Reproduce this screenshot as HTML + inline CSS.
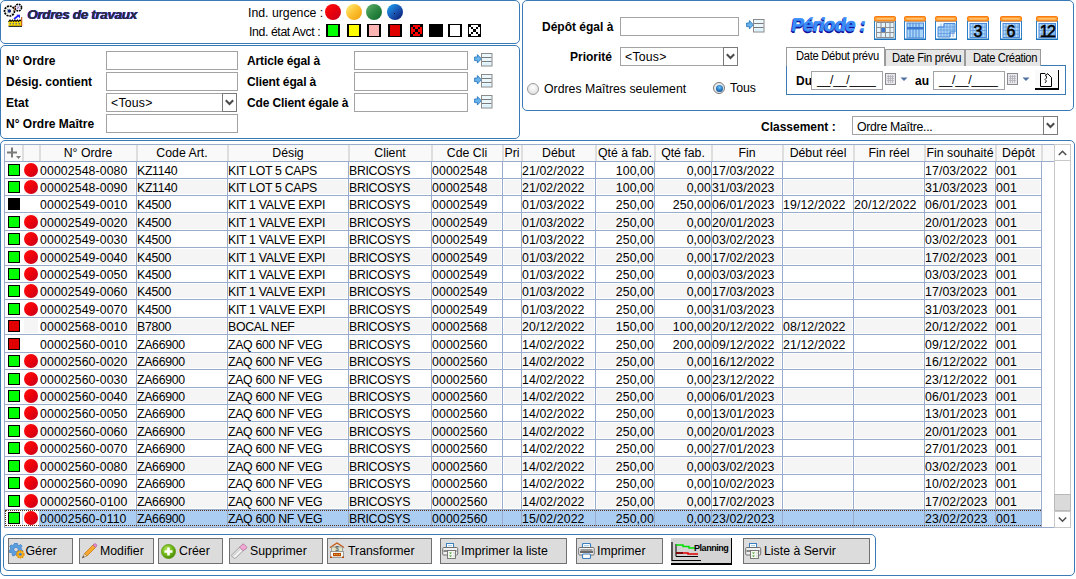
<!DOCTYPE html><html><head><meta charset="utf-8"><style>
*{margin:0;padding:0;box-sizing:border-box}
html,body{width:1076px;height:579px;overflow:hidden;background:#fff}
body{position:relative;font-family:"Liberation Sans",sans-serif;font-size:12.3px;color:#000}
.ab{position:absolute}
.pn{position:absolute;border:1px solid #3b7bb5;border-radius:5px}
.lb{position:absolute;font-weight:bold;font-size:12px;white-space:nowrap;line-height:14px}
.tx{position:absolute;white-space:nowrap;line-height:14px}
.inp{position:absolute;border:1px solid #a3a3a3;background:#fff;height:19px}
.cmb{position:absolute;border:1px solid #a3a3a3;background:#fff;height:19px}
.cmb .dd{position:absolute;right:-1px;top:-1px;width:15px;height:19px;border:1px solid #7a7a7a;background:#fff}
.cmb .v{position:absolute;left:4px;top:2px;line-height:14px;letter-spacing:0.2px}
.lico{position:absolute;width:19px;height:13px}
.sq{position:absolute;border:2px solid #000;width:14px;height:13px}
.circ{position:absolute;width:16px;height:16px;border-radius:50%}
.hl{position:absolute;height:1px;background:#9aaccb}
.vl{position:absolute;width:1px;background:#9aaccb}
.cell{position:absolute;white-space:nowrap;line-height:14px;overflow:hidden}
.hsep{position:absolute;width:2px;background:#dedede}
.btn{position:absolute;top:538px;height:26px;border:1px solid #707070;background:#dcdcdc;font-size:12.3px;white-space:nowrap}
.btn span{position:absolute;top:4.5px;line-height:14px}
.rsq{position:absolute;width:12px;height:12px;border:1px solid #000}
.rci{position:absolute;width:14px;height:14px;border-radius:50%;background:linear-gradient(135deg,#ff0a0a 15%,#e8000c 55%,#c8001e 95%)}
</style></head><body>

<div class="pn" style="left:0;top:0;width:520px;height:44px"></div>
<div class="pn" style="left:0;top:45px;width:520px;height:94px"></div>
<div class="pn" style="left:522px;top:0;width:552px;height:111px"></div>
<div class="pn" style="left:0;top:140px;width:1075px;height:436px"></div>
<div class="pn" style="left:3px;top:534px;width:873px;height:37px"></div>
<svg class="ab" style="left:3px;top:3px" width="21" height="25" viewBox="3 3 21 25">
<circle cx="9.5" cy="11" r="5" fill="#f4f4ec" stroke="#000" stroke-width="1.7" stroke-dasharray="2 0.9"/>
<circle cx="9.3" cy="11" r="1.8" fill="#102080"/>
<path d="M7 9 L8 10 M11.5 13 L12.5 14 M7 13.5 L8 12.5" stroke="#60a080" stroke-width="0.8"/>
<circle cx="18.3" cy="7.6" r="3.3" fill="#e8f0f8" stroke="#000" stroke-width="1.5" stroke-dasharray="1.8 0.8"/>
<path d="M17 6.5 L19 8.5 M19.5 6 L17 9" stroke="#a060c0" stroke-width="0.8"/>
<path d="M14.5 6.5 L14.5 11" stroke="#c07040" stroke-width="0.9"/>
<path d="M14 19 L18.5 15.5" stroke="#2020ff" stroke-width="1.6"/>
<path d="M16.5 14.8 L20 14.8 L20 18.3 Z" fill="#2020ff"/>
<rect x="8.5" y="21" width="13" height="5" fill="#ffe000"/>
<path d="M8.5 22 L10 20 L11 21.5 L12.5 20 L13.5 21.5 L15 20 L16 21.5 L17.5 20 L18.5 21.5 L20 20 L21 21" fill="none" stroke="#000" stroke-width="1.1"/>
<path d="M9.5 23.8 H11 M12.5 23.8 H14 M15.5 23.8 H17 M18.5 23.8 H20" stroke="#2040e0" stroke-width="1"/>
<path d="M8.5 26.3 H22" stroke="#000" stroke-width="1"/>
<path d="M21.7 17 V26" stroke="#c05010" stroke-width="1.1"/>
</svg>
<div class="tx" style="left:27.5px;top:6.5px;font-size:13.5px;font-weight:bold;font-style:italic;line-height:16px;letter-spacing:-0.35px;color:#303030;text-shadow:-0.8px 0 0 #2424ff,0 -0.4px 0 #2424ff">Ordres de travaux</div>
<div class="tx" style="left:248px;top:6px">Ind. urgence :</div>
<div class="tx" style="left:249px;top:25px;letter-spacing:-0.4px">Ind. état Avct :</div>
<div class="circ" style="left:325px;top:4px;background:linear-gradient(135deg,#ff0a0a 10%,#e8000c 50%,#c8001e 95%)"></div>
<div class="circ" style="left:346px;top:4px;background:linear-gradient(135deg,#ffe870 10%,#fcc030 50%,#f0a010 95%)"></div>
<div class="circ" style="left:366px;top:4px;background:linear-gradient(135deg,#5aaa6a 10%,#2e8a44 50%,#126a2e 95%)"></div>
<div class="circ" style="left:387px;top:4px;background:linear-gradient(135deg,#1a9ae8 10%,#1a5ab8 50%,#0a1a70 95%)"></div>
<div class="ab" style="left:394px;top:13px;width:1px;height:1px;background:#000"></div>
<div class="ab" style="left:326px;top:24px;width:14px;height:13px;border-style:solid;border-color:#000;border-width:1px 2px;background:#00ff00"></div>
<div class="ab" style="left:347px;top:24px;width:14px;height:13px;border-style:solid;border-color:#000;border-width:1px 2px;background:#ffff00"></div>
<div class="ab" style="left:367px;top:24px;width:14px;height:13px;border-style:solid;border-color:#000;border-width:1px 2px;background:#ffb4b4"></div>
<div class="ab" style="left:388px;top:24px;width:14px;height:13px;border-style:solid;border-color:#000;border-width:1px 2px;background:#e00000"></div>
<svg class="ab" style="left:410px;top:24px" width="13" height="13" viewBox="0 0 13 13" shape-rendering="crispEdges"><rect width="13" height="13" fill="#000"/><rect x="3" y="1" width="7" height="1" fill="#ff0000"/><rect x="3" y="2" width="7" height="1" fill="#ff0000"/><rect x="1" y="3" width="2" height="1" fill="#ff0000"/><rect x="5" y="3" width="3" height="1" fill="#ff0000"/><rect x="10" y="3" width="2" height="1" fill="#ff0000"/><rect x="1" y="4" width="2" height="1" fill="#ff0000"/><rect x="5" y="4" width="3" height="1" fill="#ff0000"/><rect x="10" y="4" width="2" height="1" fill="#ff0000"/><rect x="1" y="5" width="4" height="1" fill="#ff0000"/><rect x="8" y="5" width="4" height="1" fill="#ff0000"/><rect x="1" y="6" width="4" height="1" fill="#ff0000"/><rect x="8" y="6" width="4" height="1" fill="#ff0000"/><rect x="1" y="7" width="4" height="1" fill="#ff0000"/><rect x="8" y="7" width="4" height="1" fill="#ff0000"/><rect x="1" y="8" width="2" height="1" fill="#ff0000"/><rect x="5" y="8" width="3" height="1" fill="#ff0000"/><rect x="10" y="8" width="2" height="1" fill="#ff0000"/><rect x="1" y="9" width="2" height="1" fill="#ff0000"/><rect x="5" y="9" width="3" height="1" fill="#ff0000"/><rect x="10" y="9" width="2" height="1" fill="#ff0000"/><rect x="3" y="10" width="7" height="1" fill="#ff0000"/><rect x="3" y="11" width="7" height="1" fill="#ff0000"/></svg>
<div class="ab" style="left:429px;top:24px;width:14px;height:13px;border-style:solid;border-color:#000;border-width:1px 2px;background:#000"></div>
<div class="ab" style="left:448px;top:24px;width:14px;height:13px;border-style:solid;border-color:#000;border-width:1px 2px;background:#fff"></div>
<svg class="ab" style="left:468px;top:24px" width="13" height="13" viewBox="0 0 13 13" shape-rendering="crispEdges"><rect width="13" height="13" fill="#000"/><rect x="3" y="1" width="7" height="1" fill="#fff"/><rect x="3" y="2" width="7" height="1" fill="#fff"/><rect x="1" y="3" width="2" height="1" fill="#fff"/><rect x="5" y="3" width="3" height="1" fill="#fff"/><rect x="10" y="3" width="2" height="1" fill="#fff"/><rect x="1" y="4" width="2" height="1" fill="#fff"/><rect x="5" y="4" width="3" height="1" fill="#fff"/><rect x="10" y="4" width="2" height="1" fill="#fff"/><rect x="1" y="5" width="4" height="1" fill="#fff"/><rect x="8" y="5" width="4" height="1" fill="#fff"/><rect x="1" y="6" width="4" height="1" fill="#fff"/><rect x="8" y="6" width="4" height="1" fill="#fff"/><rect x="1" y="7" width="4" height="1" fill="#fff"/><rect x="8" y="7" width="4" height="1" fill="#fff"/><rect x="1" y="8" width="2" height="1" fill="#fff"/><rect x="5" y="8" width="3" height="1" fill="#fff"/><rect x="10" y="8" width="2" height="1" fill="#fff"/><rect x="1" y="9" width="2" height="1" fill="#fff"/><rect x="5" y="9" width="3" height="1" fill="#fff"/><rect x="10" y="9" width="2" height="1" fill="#fff"/><rect x="3" y="10" width="7" height="1" fill="#fff"/><rect x="3" y="11" width="7" height="1" fill="#fff"/></svg>
<div class="lb" style="left:6px;top:54px">N° Ordre</div>
<div class="lb" style="left:6px;top:75px">Désig. contient</div>
<div class="lb" style="left:6px;top:96px">Etat</div>
<div class="lb" style="left:6px;top:117px">N° Ordre Maître</div>
<div class="inp" style="left:106px;top:51px;width:132px"></div>
<div class="inp" style="left:106px;top:72px;width:132px"></div>
<div class="inp" style="left:106px;top:114px;width:132px"></div>
<div class="cmb" style="left:106px;top:93px;width:131px"><span class="v">&lt;Tous&gt;</span><div class="dd"><svg style="position:absolute;left:0;top:0" width="13" height="17" viewBox="0 0 13 17"><path d="M2.8 6.2 L6.5 10 L10.2 6.2" fill="none" stroke="#4a4a4a" stroke-width="2"/></svg></div></div>
<div class="lb" style="left:247px;top:54px;letter-spacing:-0.12px">Article égal à</div>
<div class="lb" style="left:247px;top:75px;letter-spacing:-0.12px">Client égal à</div>
<div class="lb" style="left:247px;top:96px;letter-spacing:-0.12px">Cde Client égale à</div>
<div class="inp" style="left:354px;top:51px;width:114px"></div>
<svg class="ab" style="left:474px;top:53px" width="19" height="14" viewBox="0 0 19 14">
<path d="M0.6 4 L3.4 4 L3.4 1.6 L7.4 5.8 L3.4 10 L3.4 7.6 L0.6 7.6 Z" fill="#6ab4ec" stroke="#2a78c0" stroke-width="0.9"/>
<rect x="7.5" y="0.5" width="10.5" height="12.5" fill="#eaf8fe" stroke="#8a8a8a" stroke-width="1"/>
<path d="M8 4.5 H17.5 M8 8.5 H17.5" stroke="#7a7a7a" stroke-width="1"/>
<path d="M9 11 H16.5" stroke="#c8ecfc" stroke-width="1"/>
</svg>
<div class="inp" style="left:354px;top:72px;width:114px"></div>
<svg class="ab" style="left:474px;top:74px" width="19" height="14" viewBox="0 0 19 14">
<path d="M0.6 4 L3.4 4 L3.4 1.6 L7.4 5.8 L3.4 10 L3.4 7.6 L0.6 7.6 Z" fill="#6ab4ec" stroke="#2a78c0" stroke-width="0.9"/>
<rect x="7.5" y="0.5" width="10.5" height="12.5" fill="#eaf8fe" stroke="#8a8a8a" stroke-width="1"/>
<path d="M8 4.5 H17.5 M8 8.5 H17.5" stroke="#7a7a7a" stroke-width="1"/>
<path d="M9 11 H16.5" stroke="#c8ecfc" stroke-width="1"/>
</svg>
<div class="inp" style="left:354px;top:93px;width:114px"></div>
<svg class="ab" style="left:474px;top:95px" width="19" height="14" viewBox="0 0 19 14">
<path d="M0.6 4 L3.4 4 L3.4 1.6 L7.4 5.8 L3.4 10 L3.4 7.6 L0.6 7.6 Z" fill="#6ab4ec" stroke="#2a78c0" stroke-width="0.9"/>
<rect x="7.5" y="0.5" width="10.5" height="12.5" fill="#eaf8fe" stroke="#8a8a8a" stroke-width="1"/>
<path d="M8 4.5 H17.5 M8 8.5 H17.5" stroke="#7a7a7a" stroke-width="1"/>
<path d="M9 11 H16.5" stroke="#c8ecfc" stroke-width="1"/>
</svg>
<div class="lb" style="left:542px;top:20px">Dépôt égal à</div>
<div class="inp" style="left:620px;top:17px;width:119px"></div>
<svg class="ab" style="left:746px;top:19px" width="19" height="14" viewBox="0 0 19 14">
<path d="M0.6 4 L3.4 4 L3.4 1.6 L7.4 5.8 L3.4 10 L3.4 7.6 L0.6 7.6 Z" fill="#6ab4ec" stroke="#2a78c0" stroke-width="0.9"/>
<rect x="7.5" y="0.5" width="10.5" height="12.5" fill="#eaf8fe" stroke="#8a8a8a" stroke-width="1"/>
<path d="M8 4.5 H17.5 M8 8.5 H17.5" stroke="#7a7a7a" stroke-width="1"/>
<path d="M9 11 H16.5" stroke="#c8ecfc" stroke-width="1"/>
</svg>
<div class="lb" style="left:570px;top:50px">Priorité</div>
<div class="cmb" style="left:620px;top:47px;width:118px"><span class="v">&lt;Tous&gt;</span><div class="dd"><svg style="position:absolute;left:0;top:0" width="13" height="17" viewBox="0 0 13 17"><path d="M2.8 6.2 L6.5 10 L10.2 6.2" fill="none" stroke="#4a4a4a" stroke-width="2"/></svg></div></div>
<div class="ab" style="left:527px;top:83px;width:12px;height:12px;border-radius:50%;border:1px solid #9a9a9a;background:radial-gradient(circle at 50% 35%,#fff 0%,#e8e8e8 60%,#d0d0d0 100%)"></div>
<div class="tx" style="left:544px;top:82px">Ordres Maîtres seulement</div>
<div class="ab" style="left:713px;top:82px;width:12px;height:12px;border-radius:50%;border:1px solid #7a7a7a;background:radial-gradient(circle at 50% 50%,#f8f8f8 0%,#e0e0e0 100%)"></div>
<div class="ab" style="left:715.5px;top:84.5px;width:7px;height:7px;border-radius:50%;background:radial-gradient(circle at 50% 35%,#7ac8f8 0%,#2a80c8 45%,#0a3a78 100%)"></div>
<div class="tx" style="left:730px;top:81px">Tous</div>
<div class="tx" style="left:790px;top:15px;font-size:18.5px;font-weight:bold;line-height:20px;color:#3a8ef8;letter-spacing:-0.6px;-webkit-text-stroke:0.6px #3a8ef8;text-shadow:-1px 1px 0 #12129a,0 1.5px 0 #12129a;transform:skewX(-9deg);transform-origin:0 100%">Période :</div>
<svg class="ab" style="left:874px;top:16px" width="22" height="24" viewBox="0 0 22 24"><rect x="0.5" y="5" width="21" height="18.5" fill="#fcfeff" stroke="#2a80c8" stroke-width="1"/><path d="M0.5 23.2 H21.5" stroke="#1a70b8" stroke-width="1.4"/><rect x="0.5" y="0.5" width="21" height="4.5" rx="1.2" fill="#ff9c30" stroke="#f87a10" stroke-width="1"/><rect x="2.5" y="2" width="17" height="1.6" fill="#ffc070"/><rect x="2.5" y="6.5" width="17.5" height="15" fill="#e4f4fe"/><rect x="7" y="11.5" width="4.5" height="5" fill="#3a78d0"/><line x1="2.5" y1="6.5" x2="2.5" y2="21.5" stroke="#8e8e8e" stroke-width="1"/><line x1="7" y1="6.5" x2="7" y2="21.5" stroke="#8e8e8e" stroke-width="1"/><line x1="11.5" y1="6.5" x2="11.5" y2="21.5" stroke="#8e8e8e" stroke-width="1"/><line x1="16" y1="6.5" x2="16" y2="21.5" stroke="#8e8e8e" stroke-width="1"/><line x1="20" y1="6.5" x2="20" y2="21.5" stroke="#8e8e8e" stroke-width="1"/><line x1="2.5" y1="6.5" x2="20" y2="6.5" stroke="#8e8e8e" stroke-width="1"/><line x1="2.5" y1="11.5" x2="20" y2="11.5" stroke="#8e8e8e" stroke-width="1"/><line x1="2.5" y1="16.5" x2="20" y2="16.5" stroke="#8e8e8e" stroke-width="1"/><line x1="2.5" y1="21.5" x2="20" y2="21.5" stroke="#8e8e8e" stroke-width="1"/></svg>
<svg class="ab" style="left:904px;top:16px" width="22" height="24" viewBox="0 0 22 24"><rect x="0.5" y="5" width="21" height="18.5" fill="#fcfeff" stroke="#2a80c8" stroke-width="1"/><path d="M0.5 23.2 H21.5" stroke="#1a70b8" stroke-width="1.4"/><rect x="0.5" y="0.5" width="21" height="4.5" rx="1.2" fill="#ff9c30" stroke="#f87a10" stroke-width="1"/><rect x="2.5" y="2" width="17" height="1.6" fill="#ffc070"/><rect x="3" y="7" width="16.5" height="15" fill="#a8d4f8" stroke="#4a88d8" stroke-width="1"/><line x1="6" y1="7" x2="6" y2="22" stroke="#4a88d8" stroke-width="1"/><line x1="9" y1="7" x2="9" y2="22" stroke="#4a88d8" stroke-width="1"/><line x1="12" y1="7" x2="12" y2="22" stroke="#4a88d8" stroke-width="1"/><line x1="15" y1="7" x2="15" y2="22" stroke="#4a88d8" stroke-width="1"/><rect x="3" y="11" width="16.5" height="2.5" fill="#3a78d0"/></svg>
<svg class="ab" style="left:935px;top:16px" width="22" height="24" viewBox="0 0 22 24"><rect x="0.5" y="5" width="21" height="18.5" fill="#fcfeff" stroke="#2a80c8" stroke-width="1"/><path d="M0.5 23.2 H21.5" stroke="#1a70b8" stroke-width="1.4"/><rect x="0.5" y="0.5" width="21" height="4.5" rx="1.2" fill="#ff9c30" stroke="#f87a10" stroke-width="1"/><rect x="2.5" y="2" width="17" height="1.6" fill="#ffc070"/><rect x="2.5" y="6.5" width="17.5" height="15" fill="#f4fbff"/><path d="M9 7.5 H20 V16 H15 V21 H3 V11 H9 Z" fill="#a8d4f8" stroke="#4a88d8" stroke-width="1"/><line x1="6" y1="7.5" x2="6" y2="21" stroke="#4a88d8" stroke-width="0.8" opacity="0.7"/><line x1="9" y1="7.5" x2="9" y2="21" stroke="#4a88d8" stroke-width="0.8" opacity="0.7"/><line x1="12" y1="7.5" x2="12" y2="21" stroke="#4a88d8" stroke-width="0.8" opacity="0.7"/><line x1="15" y1="7.5" x2="15" y2="21" stroke="#4a88d8" stroke-width="0.8" opacity="0.7"/><line x1="18" y1="7.5" x2="18" y2="21" stroke="#4a88d8" stroke-width="0.8" opacity="0.7"/><line x1="3" y1="11" x2="20" y2="11" stroke="#4a88d8" stroke-width="0.8" opacity="0.7"/><line x1="3" y1="14" x2="20" y2="14" stroke="#4a88d8" stroke-width="0.8" opacity="0.7"/><line x1="3" y1="17.5" x2="20" y2="17.5" stroke="#4a88d8" stroke-width="0.8" opacity="0.7"/></svg>
<svg class="ab" style="left:967px;top:16px" width="22" height="24" viewBox="0 0 22 24"><rect x="0.5" y="5" width="21" height="18.5" fill="#fcfeff" stroke="#2a80c8" stroke-width="1"/><path d="M0.5 23.2 H21.5" stroke="#1a70b8" stroke-width="1.4"/><rect x="0.5" y="0.5" width="21" height="4.5" rx="1.2" fill="#ff9c30" stroke="#f87a10" stroke-width="1"/><rect x="2.5" y="2" width="17" height="1.6" fill="#ffc070"/><rect x="3" y="7.5" width="16.5" height="14" fill="#b0d8f8" stroke="#4a88d8" stroke-width="1"/><line x1="6" y1="7.5" x2="6" y2="21.5" stroke="#5a98e0" stroke-width="0.8"/><line x1="9" y1="7.5" x2="9" y2="21.5" stroke="#5a98e0" stroke-width="0.8"/><line x1="12" y1="7.5" x2="12" y2="21.5" stroke="#5a98e0" stroke-width="0.8"/><line x1="15" y1="7.5" x2="15" y2="21.5" stroke="#5a98e0" stroke-width="0.8"/><line x1="18" y1="7.5" x2="18" y2="21.5" stroke="#5a98e0" stroke-width="0.8"/><line x1="3" y1="11" x2="19.5" y2="11" stroke="#5a98e0" stroke-width="0.8"/><line x1="3" y1="14.5" x2="19.5" y2="14.5" stroke="#5a98e0" stroke-width="0.8"/><line x1="3" y1="18" x2="19.5" y2="18" stroke="#5a98e0" stroke-width="0.8"/><text x="11" y="20.5" text-anchor="middle" font-family="Liberation Sans" font-size="16" letter-spacing="0" fill="#000" stroke="#000" stroke-width="0.5">3</text></svg>
<svg class="ab" style="left:1000px;top:16px" width="22" height="24" viewBox="0 0 22 24"><rect x="0.5" y="5" width="21" height="18.5" fill="#fcfeff" stroke="#2a80c8" stroke-width="1"/><path d="M0.5 23.2 H21.5" stroke="#1a70b8" stroke-width="1.4"/><rect x="0.5" y="0.5" width="21" height="4.5" rx="1.2" fill="#ff9c30" stroke="#f87a10" stroke-width="1"/><rect x="2.5" y="2" width="17" height="1.6" fill="#ffc070"/><rect x="3" y="7.5" width="16.5" height="14" fill="#b0d8f8" stroke="#4a88d8" stroke-width="1"/><line x1="6" y1="7.5" x2="6" y2="21.5" stroke="#5a98e0" stroke-width="0.8"/><line x1="9" y1="7.5" x2="9" y2="21.5" stroke="#5a98e0" stroke-width="0.8"/><line x1="12" y1="7.5" x2="12" y2="21.5" stroke="#5a98e0" stroke-width="0.8"/><line x1="15" y1="7.5" x2="15" y2="21.5" stroke="#5a98e0" stroke-width="0.8"/><line x1="18" y1="7.5" x2="18" y2="21.5" stroke="#5a98e0" stroke-width="0.8"/><line x1="3" y1="11" x2="19.5" y2="11" stroke="#5a98e0" stroke-width="0.8"/><line x1="3" y1="14.5" x2="19.5" y2="14.5" stroke="#5a98e0" stroke-width="0.8"/><line x1="3" y1="18" x2="19.5" y2="18" stroke="#5a98e0" stroke-width="0.8"/><text x="11" y="20.5" text-anchor="middle" font-family="Liberation Sans" font-size="16" letter-spacing="0" fill="#000" stroke="#000" stroke-width="0.5">6</text></svg>
<svg class="ab" style="left:1036px;top:16px" width="22" height="24" viewBox="0 0 22 24"><rect x="0.5" y="5" width="21" height="18.5" fill="#fcfeff" stroke="#2a80c8" stroke-width="1"/><path d="M0.5 23.2 H21.5" stroke="#1a70b8" stroke-width="1.4"/><rect x="0.5" y="0.5" width="21" height="4.5" rx="1.2" fill="#ff9c30" stroke="#f87a10" stroke-width="1"/><rect x="2.5" y="2" width="17" height="1.6" fill="#ffc070"/><rect x="3" y="7.5" width="16.5" height="14" fill="#b0d8f8" stroke="#4a88d8" stroke-width="1"/><line x1="6" y1="7.5" x2="6" y2="21.5" stroke="#5a98e0" stroke-width="0.8"/><line x1="9" y1="7.5" x2="9" y2="21.5" stroke="#5a98e0" stroke-width="0.8"/><line x1="12" y1="7.5" x2="12" y2="21.5" stroke="#5a98e0" stroke-width="0.8"/><line x1="15" y1="7.5" x2="15" y2="21.5" stroke="#5a98e0" stroke-width="0.8"/><line x1="18" y1="7.5" x2="18" y2="21.5" stroke="#5a98e0" stroke-width="0.8"/><line x1="3" y1="11" x2="19.5" y2="11" stroke="#5a98e0" stroke-width="0.8"/><line x1="3" y1="14.5" x2="19.5" y2="14.5" stroke="#5a98e0" stroke-width="0.8"/><line x1="3" y1="18" x2="19.5" y2="18" stroke="#5a98e0" stroke-width="0.8"/><text x="11" y="20.5" text-anchor="middle" font-family="Liberation Sans" font-size="16" letter-spacing="-1.6" fill="#000" stroke="#000" stroke-width="0.5">12</text></svg>
<div class="ab" style="left:786px;top:65px;width:280px;height:30px;border:1px solid #3b7bb5;border-top-color:#3b7bb5"></div>
<div class="ab" style="left:885px;top:49px;width:80px;height:17px;border:1px solid #9a9a9a;border-bottom:none;background:#e6e6e6"></div>
<div class="ab" style="left:965px;top:49px;width:76px;height:17px;border:1px solid #9a9a9a;border-bottom:none;background:#e6e6e6"></div>
<div class="ab" style="left:786px;top:47px;width:99px;height:19px;border:1px solid #9a9a9a;border-bottom:none;background:#fff"></div>
<div class="tx" style="left:796px;top:48.5px;font-size:12px;letter-spacing:-0.3px;transform:scaleX(0.93);transform-origin:0 0">Date Début prévu</div>
<div class="tx" style="left:892px;top:50.5px;font-size:12px;letter-spacing:-0.3px;transform:scaleX(0.93);transform-origin:0 0">Date Fin prévu</div>
<div class="tx" style="left:973px;top:50.5px;font-size:12px;letter-spacing:-0.4px;transform:scaleX(0.93);transform-origin:0 0">Date Création</div>
<div class="lb" style="left:796px;top:74px">Du</div>
<div class="inp" style="left:811px;top:71px;width:72px"><span class="tx" style="left:5px;top:1px;letter-spacing:-0.3px">__/__/____</span></div>
<div class="lb" style="left:915px;top:74px">au</div>
<div class="inp" style="left:933px;top:71px;width:72px"><span class="tx" style="left:5px;top:1px;letter-spacing:-0.3px">__/__/____</span></div>
<svg class="ab" style="left:885px;top:73px" width="24" height="12" viewBox="0 0 24 12">
<rect x="0.5" y="0.5" width="10" height="11" fill="#e8e8ec" stroke="#8a8a90"/>
<path d="M2 3.5H9 M2 5.5H9 M2 7.5H9 M3.5 2V10 M5.5 2V10 M7.5 2V10" stroke="#b0b0b8" stroke-width="0.8"/>
<path d="M15.5 4.5 L22.5 4.5 L19 8 Z" fill="#5070a0"/>
</svg>
<svg class="ab" style="left:1007px;top:73px" width="24" height="12" viewBox="0 0 24 12">
<rect x="0.5" y="0.5" width="10" height="11" fill="#e8e8ec" stroke="#8a8a90"/>
<path d="M2 3.5H9 M2 5.5H9 M2 7.5H9 M3.5 2V10 M5.5 2V10 M7.5 2V10" stroke="#b0b0b8" stroke-width="0.8"/>
<path d="M15.5 4.5 L22.5 4.5 L19 8 Z" fill="#5070a0"/>
</svg>
<div class="ab" style="left:1035px;top:70px;width:24px;height:20px;background:#fafafa;border-right:1.5px solid #000;border-bottom:2px solid #000"></div>
<svg class="ab" style="left:1039px;top:72px" width="14" height="16" viewBox="0 0 14 16"><path d="M1.5 1.5 H6 L7.5 3 L8.5 1.5 L12.5 5.5 V14.5 H1.5 Z" fill="#fff" stroke="#000" stroke-width="1"/><path d="M6 3.5 Q8 3 7.5 6 L6 7.5 L7.5 9 L6 11" stroke="#000" fill="none" stroke-width="0.9"/></svg>
<div class="lb" style="left:761px;top:120px">Classement :</div>
<div class="cmb" style="left:852px;top:116px;width:206px"><span class="v" style="left:4px;top:3px;letter-spacing:-0.3px">Ordre Maître...</span><div class="dd"><svg style="position:absolute;left:0;top:0" width="13" height="17" viewBox="0 0 13 17"><path d="M2.8 6.2 L6.5 10 L10.2 6.2" fill="none" stroke="#4a4a4a" stroke-width="2"/></svg></div></div>
<div class="ab" style="left:4px;top:144px;width:1051px;height:384px;border:1px solid #9aaccb;background:#fff"></div>
<div class="ab" style="left:5px;top:145px;width:1049px;height:16px;background:#f9f9f9"></div>
<div class="hl" style="left:5px;top:161px;width:1049px"></div>
<div class="hsep" style="left:22px;top:145px;height:16px"></div>
<div class="hsep" style="left:39px;top:145px;height:16px"></div>
<div class="hsep" style="left:136px;top:145px;height:16px"></div>
<div class="hsep" style="left:227px;top:145px;height:16px"></div>
<div class="hsep" style="left:348px;top:145px;height:16px"></div>
<div class="hsep" style="left:431px;top:145px;height:16px"></div>
<div class="hsep" style="left:502px;top:145px;height:16px"></div>
<div class="hsep" style="left:521px;top:145px;height:16px"></div>
<div class="hsep" style="left:595px;top:145px;height:16px"></div>
<div class="hsep" style="left:654px;top:145px;height:16px"></div>
<div class="hsep" style="left:711px;top:145px;height:16px"></div>
<div class="hsep" style="left:782px;top:145px;height:16px"></div>
<div class="hsep" style="left:853px;top:145px;height:16px"></div>
<div class="hsep" style="left:924px;top:145px;height:16px"></div>
<div class="hsep" style="left:995px;top:145px;height:16px"></div>
<div class="hsep" style="left:1041px;top:145px;height:16px"></div>
<svg class="ab" style="left:6px;top:146px" width="16" height="14" viewBox="0 0 16 14"><path d="M1 6.5 H11 M6 1.5 V11.5" stroke="#7a7a7a" stroke-width="2"/><path d="M10 10 H15 L12.5 13 Z" fill="#7a7a7a"/></svg>
<div class="cell" style="left:40px;top:146px;width:96px;text-align:center">N° Ordre</div>
<div class="cell" style="left:137px;top:146px;width:90px;text-align:center">Code Art.</div>
<div class="cell" style="left:228px;top:146px;width:120px;text-align:center">Désig</div>
<div class="cell" style="left:349px;top:146px;width:82px;text-align:center">Client</div>
<div class="cell" style="left:432px;top:146px;width:70px;text-align:center">Cde Cli</div>
<div class="cell" style="left:503px;top:146px;width:18px;text-align:center">Pri</div>
<div class="cell" style="left:522px;top:146px;width:73px;text-align:center">Début</div>
<div class="cell" style="left:596px;top:146px;width:58px;text-align:center">Qté à fab.</div>
<div class="cell" style="left:655px;top:146px;width:56px;text-align:center">Qté fab.</div>
<div class="cell" style="left:712px;top:146px;width:70px;text-align:center">Fin</div>
<div class="cell" style="left:783px;top:146px;width:70px;text-align:center">Début réel</div>
<div class="cell" style="left:854px;top:146px;width:70px;text-align:center">Fin réel</div>
<div class="cell" style="left:925px;top:146px;width:70px;text-align:center">Fin souhaité</div>
<div class="cell" style="left:996px;top:146px;width:45px;text-align:center">Dépôt</div>
<div class="hl" style="left:5px;top:178px;width:1036px"></div>
<div class="rsq" style="left:8px;top:164px;background:#00ff00"></div>
<div class="rci" style="left:24px;top:163px"></div>
<div class="cell" style="left:40px;top:164px;width:96px;letter-spacing:0.1px">00002548-0080</div>
<div class="cell" style="left:137px;top:164px;width:90px;letter-spacing:-0.3px">KZ1140</div>
<div class="cell" style="left:228px;top:164px;width:120px;letter-spacing:-0.3px">KIT LOT 5 CAPS</div>
<div class="cell" style="left:349px;top:164px;width:82px;letter-spacing:-0.3px">BRICOSYS</div>
<div class="cell" style="left:432px;top:164px;width:70px;letter-spacing:0.1px">00002548</div>
<div class="cell" style="left:522px;top:164px;width:73px;letter-spacing:0.1px">21/02/2022</div>
<div class="cell" style="left:595px;top:164px;width:59px;text-align:right;letter-spacing:0.1px">100,00</div>
<div class="cell" style="left:654px;top:164px;width:57px;text-align:right;letter-spacing:0.1px">0,00</div>
<div class="cell" style="left:712px;top:164px;width:70px;letter-spacing:0.1px">17/03/2022</div>
<div class="cell" style="left:925px;top:164px;width:70px;letter-spacing:0.1px">17/03/2022</div>
<div class="cell" style="left:996px;top:164px;width:45px;letter-spacing:0.1px">001</div>
<div class="ab" style="left:23px;top:179px;width:16px;height:16px;border:1px solid #fff;background:#f5f5f5"></div>
<div class="ab" style="left:40px;top:179px;width:96px;height:16px;border:1px solid #fff;background:#f5f5f5"></div>
<div class="ab" style="left:137px;top:179px;width:90px;height:16px;border:1px solid #fff;background:#f5f5f5"></div>
<div class="ab" style="left:228px;top:179px;width:120px;height:16px;border:1px solid #fff;background:#f5f5f5"></div>
<div class="ab" style="left:349px;top:179px;width:82px;height:16px;border:1px solid #fff;background:#f5f5f5"></div>
<div class="ab" style="left:432px;top:179px;width:70px;height:16px;border:1px solid #fff;background:#f5f5f5"></div>
<div class="ab" style="left:503px;top:179px;width:18px;height:16px;border:1px solid #fff;background:#f5f5f5"></div>
<div class="ab" style="left:522px;top:179px;width:73px;height:16px;border:1px solid #fff;background:#f5f5f5"></div>
<div class="ab" style="left:596px;top:179px;width:58px;height:16px;border:1px solid #fff;background:#f5f5f5"></div>
<div class="ab" style="left:655px;top:179px;width:56px;height:16px;border:1px solid #fff;background:#f5f5f5"></div>
<div class="ab" style="left:712px;top:179px;width:70px;height:16px;border:1px solid #fff;background:#f5f5f5"></div>
<div class="ab" style="left:783px;top:179px;width:70px;height:16px;border:1px solid #fff;background:#f5f5f5"></div>
<div class="ab" style="left:854px;top:179px;width:70px;height:16px;border:1px solid #fff;background:#f5f5f5"></div>
<div class="ab" style="left:925px;top:179px;width:70px;height:16px;border:1px solid #fff;background:#f5f5f5"></div>
<div class="ab" style="left:996px;top:179px;width:45px;height:16px;border:1px solid #fff;background:#f5f5f5"></div>
<div class="hl" style="left:5px;top:195px;width:1036px"></div>
<div class="rsq" style="left:8px;top:181px;background:#00ff00"></div>
<div class="rci" style="left:24px;top:180px"></div>
<div class="cell" style="left:40px;top:181px;width:96px;letter-spacing:0.1px">00002548-0090</div>
<div class="cell" style="left:137px;top:181px;width:90px;letter-spacing:-0.3px">KZ1140</div>
<div class="cell" style="left:228px;top:181px;width:120px;letter-spacing:-0.3px">KIT LOT 5 CAPS</div>
<div class="cell" style="left:349px;top:181px;width:82px;letter-spacing:-0.3px">BRICOSYS</div>
<div class="cell" style="left:432px;top:181px;width:70px;letter-spacing:0.1px">00002548</div>
<div class="cell" style="left:522px;top:181px;width:73px;letter-spacing:0.1px">21/02/2022</div>
<div class="cell" style="left:595px;top:181px;width:59px;text-align:right;letter-spacing:0.1px">100,00</div>
<div class="cell" style="left:654px;top:181px;width:57px;text-align:right;letter-spacing:0.1px">0,00</div>
<div class="cell" style="left:712px;top:181px;width:70px;letter-spacing:0.1px">31/03/2023</div>
<div class="cell" style="left:925px;top:181px;width:70px;letter-spacing:0.1px">31/03/2023</div>
<div class="cell" style="left:996px;top:181px;width:45px;letter-spacing:0.1px">001</div>
<div class="hl" style="left:5px;top:212px;width:1036px"></div>
<div class="rsq" style="left:8px;top:198px;background:#000"></div>
<div class="cell" style="left:40px;top:198px;width:96px;letter-spacing:0.1px">00002549-0010</div>
<div class="cell" style="left:137px;top:198px;width:90px;letter-spacing:-0.3px">K4500</div>
<div class="cell" style="left:228px;top:198px;width:120px;letter-spacing:-0.3px">KIT 1 VALVE EXPI</div>
<div class="cell" style="left:349px;top:198px;width:82px;letter-spacing:-0.3px">BRICOSYS</div>
<div class="cell" style="left:432px;top:198px;width:70px;letter-spacing:0.1px">00002549</div>
<div class="cell" style="left:522px;top:198px;width:73px;letter-spacing:0.1px">01/03/2022</div>
<div class="cell" style="left:595px;top:198px;width:59px;text-align:right;letter-spacing:0.1px">250,00</div>
<div class="cell" style="left:654px;top:198px;width:57px;text-align:right;letter-spacing:0.1px">250,00</div>
<div class="cell" style="left:712px;top:198px;width:70px;letter-spacing:0.1px">06/01/2023</div>
<div class="cell" style="left:783px;top:198px;width:70px;letter-spacing:0.1px">19/12/2022</div>
<div class="cell" style="left:854px;top:198px;width:70px;letter-spacing:0.1px">20/12/2022</div>
<div class="cell" style="left:925px;top:198px;width:70px;letter-spacing:0.1px">06/01/2023</div>
<div class="cell" style="left:996px;top:198px;width:45px;letter-spacing:0.1px">001</div>
<div class="ab" style="left:23px;top:213px;width:16px;height:17px;border:1px solid #fff;background:#f5f5f5"></div>
<div class="ab" style="left:40px;top:213px;width:96px;height:17px;border:1px solid #fff;background:#f5f5f5"></div>
<div class="ab" style="left:137px;top:213px;width:90px;height:17px;border:1px solid #fff;background:#f5f5f5"></div>
<div class="ab" style="left:228px;top:213px;width:120px;height:17px;border:1px solid #fff;background:#f5f5f5"></div>
<div class="ab" style="left:349px;top:213px;width:82px;height:17px;border:1px solid #fff;background:#f5f5f5"></div>
<div class="ab" style="left:432px;top:213px;width:70px;height:17px;border:1px solid #fff;background:#f5f5f5"></div>
<div class="ab" style="left:503px;top:213px;width:18px;height:17px;border:1px solid #fff;background:#f5f5f5"></div>
<div class="ab" style="left:522px;top:213px;width:73px;height:17px;border:1px solid #fff;background:#f5f5f5"></div>
<div class="ab" style="left:596px;top:213px;width:58px;height:17px;border:1px solid #fff;background:#f5f5f5"></div>
<div class="ab" style="left:655px;top:213px;width:56px;height:17px;border:1px solid #fff;background:#f5f5f5"></div>
<div class="ab" style="left:712px;top:213px;width:70px;height:17px;border:1px solid #fff;background:#f5f5f5"></div>
<div class="ab" style="left:783px;top:213px;width:70px;height:17px;border:1px solid #fff;background:#f5f5f5"></div>
<div class="ab" style="left:854px;top:213px;width:70px;height:17px;border:1px solid #fff;background:#f5f5f5"></div>
<div class="ab" style="left:925px;top:213px;width:70px;height:17px;border:1px solid #fff;background:#f5f5f5"></div>
<div class="ab" style="left:996px;top:213px;width:45px;height:17px;border:1px solid #fff;background:#f5f5f5"></div>
<div class="hl" style="left:5px;top:230px;width:1036px"></div>
<div class="rsq" style="left:8px;top:216px;background:#00ff00"></div>
<div class="rci" style="left:24px;top:215px"></div>
<div class="cell" style="left:40px;top:216px;width:96px;letter-spacing:0.1px">00002549-0020</div>
<div class="cell" style="left:137px;top:216px;width:90px;letter-spacing:-0.3px">K4500</div>
<div class="cell" style="left:228px;top:216px;width:120px;letter-spacing:-0.3px">KIT 1 VALVE EXPI</div>
<div class="cell" style="left:349px;top:216px;width:82px;letter-spacing:-0.3px">BRICOSYS</div>
<div class="cell" style="left:432px;top:216px;width:70px;letter-spacing:0.1px">00002549</div>
<div class="cell" style="left:522px;top:216px;width:73px;letter-spacing:0.1px">01/03/2022</div>
<div class="cell" style="left:595px;top:216px;width:59px;text-align:right;letter-spacing:0.1px">250,00</div>
<div class="cell" style="left:654px;top:216px;width:57px;text-align:right;letter-spacing:0.1px">0,00</div>
<div class="cell" style="left:712px;top:216px;width:70px;letter-spacing:0.1px">20/01/2023</div>
<div class="cell" style="left:925px;top:216px;width:70px;letter-spacing:0.1px">20/01/2023</div>
<div class="cell" style="left:996px;top:216px;width:45px;letter-spacing:0.1px">001</div>
<div class="hl" style="left:5px;top:247px;width:1036px"></div>
<div class="rsq" style="left:8px;top:233px;background:#00ff00"></div>
<div class="rci" style="left:24px;top:232px"></div>
<div class="cell" style="left:40px;top:233px;width:96px;letter-spacing:0.1px">00002549-0030</div>
<div class="cell" style="left:137px;top:233px;width:90px;letter-spacing:-0.3px">K4500</div>
<div class="cell" style="left:228px;top:233px;width:120px;letter-spacing:-0.3px">KIT 1 VALVE EXPI</div>
<div class="cell" style="left:349px;top:233px;width:82px;letter-spacing:-0.3px">BRICOSYS</div>
<div class="cell" style="left:432px;top:233px;width:70px;letter-spacing:0.1px">00002549</div>
<div class="cell" style="left:522px;top:233px;width:73px;letter-spacing:0.1px">01/03/2022</div>
<div class="cell" style="left:595px;top:233px;width:59px;text-align:right;letter-spacing:0.1px">250,00</div>
<div class="cell" style="left:654px;top:233px;width:57px;text-align:right;letter-spacing:0.1px">0,00</div>
<div class="cell" style="left:712px;top:233px;width:70px;letter-spacing:0.1px">03/02/2023</div>
<div class="cell" style="left:925px;top:233px;width:70px;letter-spacing:0.1px">03/02/2023</div>
<div class="cell" style="left:996px;top:233px;width:45px;letter-spacing:0.1px">001</div>
<div class="ab" style="left:23px;top:248px;width:16px;height:17px;border:1px solid #fff;background:#f5f5f5"></div>
<div class="ab" style="left:40px;top:248px;width:96px;height:17px;border:1px solid #fff;background:#f5f5f5"></div>
<div class="ab" style="left:137px;top:248px;width:90px;height:17px;border:1px solid #fff;background:#f5f5f5"></div>
<div class="ab" style="left:228px;top:248px;width:120px;height:17px;border:1px solid #fff;background:#f5f5f5"></div>
<div class="ab" style="left:349px;top:248px;width:82px;height:17px;border:1px solid #fff;background:#f5f5f5"></div>
<div class="ab" style="left:432px;top:248px;width:70px;height:17px;border:1px solid #fff;background:#f5f5f5"></div>
<div class="ab" style="left:503px;top:248px;width:18px;height:17px;border:1px solid #fff;background:#f5f5f5"></div>
<div class="ab" style="left:522px;top:248px;width:73px;height:17px;border:1px solid #fff;background:#f5f5f5"></div>
<div class="ab" style="left:596px;top:248px;width:58px;height:17px;border:1px solid #fff;background:#f5f5f5"></div>
<div class="ab" style="left:655px;top:248px;width:56px;height:17px;border:1px solid #fff;background:#f5f5f5"></div>
<div class="ab" style="left:712px;top:248px;width:70px;height:17px;border:1px solid #fff;background:#f5f5f5"></div>
<div class="ab" style="left:783px;top:248px;width:70px;height:17px;border:1px solid #fff;background:#f5f5f5"></div>
<div class="ab" style="left:854px;top:248px;width:70px;height:17px;border:1px solid #fff;background:#f5f5f5"></div>
<div class="ab" style="left:925px;top:248px;width:70px;height:17px;border:1px solid #fff;background:#f5f5f5"></div>
<div class="ab" style="left:996px;top:248px;width:45px;height:17px;border:1px solid #fff;background:#f5f5f5"></div>
<div class="hl" style="left:5px;top:265px;width:1036px"></div>
<div class="rsq" style="left:8px;top:251px;background:#00ff00"></div>
<div class="rci" style="left:24px;top:250px"></div>
<div class="cell" style="left:40px;top:251px;width:96px;letter-spacing:0.1px">00002549-0040</div>
<div class="cell" style="left:137px;top:251px;width:90px;letter-spacing:-0.3px">K4500</div>
<div class="cell" style="left:228px;top:251px;width:120px;letter-spacing:-0.3px">KIT 1 VALVE EXPI</div>
<div class="cell" style="left:349px;top:251px;width:82px;letter-spacing:-0.3px">BRICOSYS</div>
<div class="cell" style="left:432px;top:251px;width:70px;letter-spacing:0.1px">00002549</div>
<div class="cell" style="left:522px;top:251px;width:73px;letter-spacing:0.1px">01/03/2022</div>
<div class="cell" style="left:595px;top:251px;width:59px;text-align:right;letter-spacing:0.1px">250,00</div>
<div class="cell" style="left:654px;top:251px;width:57px;text-align:right;letter-spacing:0.1px">0,00</div>
<div class="cell" style="left:712px;top:251px;width:70px;letter-spacing:0.1px">17/02/2023</div>
<div class="cell" style="left:925px;top:251px;width:70px;letter-spacing:0.1px">17/02/2023</div>
<div class="cell" style="left:996px;top:251px;width:45px;letter-spacing:0.1px">001</div>
<div class="hl" style="left:5px;top:282px;width:1036px"></div>
<div class="rsq" style="left:8px;top:268px;background:#00ff00"></div>
<div class="rci" style="left:24px;top:267px"></div>
<div class="cell" style="left:40px;top:268px;width:96px;letter-spacing:0.1px">00002549-0050</div>
<div class="cell" style="left:137px;top:268px;width:90px;letter-spacing:-0.3px">K4500</div>
<div class="cell" style="left:228px;top:268px;width:120px;letter-spacing:-0.3px">KIT 1 VALVE EXPI</div>
<div class="cell" style="left:349px;top:268px;width:82px;letter-spacing:-0.3px">BRICOSYS</div>
<div class="cell" style="left:432px;top:268px;width:70px;letter-spacing:0.1px">00002549</div>
<div class="cell" style="left:522px;top:268px;width:73px;letter-spacing:0.1px">01/03/2022</div>
<div class="cell" style="left:595px;top:268px;width:59px;text-align:right;letter-spacing:0.1px">250,00</div>
<div class="cell" style="left:654px;top:268px;width:57px;text-align:right;letter-spacing:0.1px">0,00</div>
<div class="cell" style="left:712px;top:268px;width:70px;letter-spacing:0.1px">03/03/2023</div>
<div class="cell" style="left:925px;top:268px;width:70px;letter-spacing:0.1px">03/03/2023</div>
<div class="cell" style="left:996px;top:268px;width:45px;letter-spacing:0.1px">001</div>
<div class="ab" style="left:23px;top:283px;width:16px;height:16px;border:1px solid #fff;background:#f5f5f5"></div>
<div class="ab" style="left:40px;top:283px;width:96px;height:16px;border:1px solid #fff;background:#f5f5f5"></div>
<div class="ab" style="left:137px;top:283px;width:90px;height:16px;border:1px solid #fff;background:#f5f5f5"></div>
<div class="ab" style="left:228px;top:283px;width:120px;height:16px;border:1px solid #fff;background:#f5f5f5"></div>
<div class="ab" style="left:349px;top:283px;width:82px;height:16px;border:1px solid #fff;background:#f5f5f5"></div>
<div class="ab" style="left:432px;top:283px;width:70px;height:16px;border:1px solid #fff;background:#f5f5f5"></div>
<div class="ab" style="left:503px;top:283px;width:18px;height:16px;border:1px solid #fff;background:#f5f5f5"></div>
<div class="ab" style="left:522px;top:283px;width:73px;height:16px;border:1px solid #fff;background:#f5f5f5"></div>
<div class="ab" style="left:596px;top:283px;width:58px;height:16px;border:1px solid #fff;background:#f5f5f5"></div>
<div class="ab" style="left:655px;top:283px;width:56px;height:16px;border:1px solid #fff;background:#f5f5f5"></div>
<div class="ab" style="left:712px;top:283px;width:70px;height:16px;border:1px solid #fff;background:#f5f5f5"></div>
<div class="ab" style="left:783px;top:283px;width:70px;height:16px;border:1px solid #fff;background:#f5f5f5"></div>
<div class="ab" style="left:854px;top:283px;width:70px;height:16px;border:1px solid #fff;background:#f5f5f5"></div>
<div class="ab" style="left:925px;top:283px;width:70px;height:16px;border:1px solid #fff;background:#f5f5f5"></div>
<div class="ab" style="left:996px;top:283px;width:45px;height:16px;border:1px solid #fff;background:#f5f5f5"></div>
<div class="hl" style="left:5px;top:299px;width:1036px"></div>
<div class="rsq" style="left:8px;top:285px;background:#00ff00"></div>
<div class="rci" style="left:24px;top:284px"></div>
<div class="cell" style="left:40px;top:285px;width:96px;letter-spacing:0.1px">00002549-0060</div>
<div class="cell" style="left:137px;top:285px;width:90px;letter-spacing:-0.3px">K4500</div>
<div class="cell" style="left:228px;top:285px;width:120px;letter-spacing:-0.3px">KIT 1 VALVE EXPI</div>
<div class="cell" style="left:349px;top:285px;width:82px;letter-spacing:-0.3px">BRICOSYS</div>
<div class="cell" style="left:432px;top:285px;width:70px;letter-spacing:0.1px">00002549</div>
<div class="cell" style="left:522px;top:285px;width:73px;letter-spacing:0.1px">01/03/2022</div>
<div class="cell" style="left:595px;top:285px;width:59px;text-align:right;letter-spacing:0.1px">250,00</div>
<div class="cell" style="left:654px;top:285px;width:57px;text-align:right;letter-spacing:0.1px">0,00</div>
<div class="cell" style="left:712px;top:285px;width:70px;letter-spacing:0.1px">17/03/2023</div>
<div class="cell" style="left:925px;top:285px;width:70px;letter-spacing:0.1px">17/03/2023</div>
<div class="cell" style="left:996px;top:285px;width:45px;letter-spacing:0.1px">001</div>
<div class="hl" style="left:5px;top:317px;width:1036px"></div>
<div class="rsq" style="left:8px;top:303px;background:#00ff00"></div>
<div class="rci" style="left:24px;top:302px"></div>
<div class="cell" style="left:40px;top:303px;width:96px;letter-spacing:0.1px">00002549-0070</div>
<div class="cell" style="left:137px;top:303px;width:90px;letter-spacing:-0.3px">K4500</div>
<div class="cell" style="left:228px;top:303px;width:120px;letter-spacing:-0.3px">KIT 1 VALVE EXPI</div>
<div class="cell" style="left:349px;top:303px;width:82px;letter-spacing:-0.3px">BRICOSYS</div>
<div class="cell" style="left:432px;top:303px;width:70px;letter-spacing:0.1px">00002549</div>
<div class="cell" style="left:522px;top:303px;width:73px;letter-spacing:0.1px">01/03/2022</div>
<div class="cell" style="left:595px;top:303px;width:59px;text-align:right;letter-spacing:0.1px">250,00</div>
<div class="cell" style="left:654px;top:303px;width:57px;text-align:right;letter-spacing:0.1px">0,00</div>
<div class="cell" style="left:712px;top:303px;width:70px;letter-spacing:0.1px">31/03/2023</div>
<div class="cell" style="left:925px;top:303px;width:70px;letter-spacing:0.1px">31/03/2023</div>
<div class="cell" style="left:996px;top:303px;width:45px;letter-spacing:0.1px">001</div>
<div class="ab" style="left:23px;top:318px;width:16px;height:16px;border:1px solid #fff;background:#f5f5f5"></div>
<div class="ab" style="left:40px;top:318px;width:96px;height:16px;border:1px solid #fff;background:#f5f5f5"></div>
<div class="ab" style="left:137px;top:318px;width:90px;height:16px;border:1px solid #fff;background:#f5f5f5"></div>
<div class="ab" style="left:228px;top:318px;width:120px;height:16px;border:1px solid #fff;background:#f5f5f5"></div>
<div class="ab" style="left:349px;top:318px;width:82px;height:16px;border:1px solid #fff;background:#f5f5f5"></div>
<div class="ab" style="left:432px;top:318px;width:70px;height:16px;border:1px solid #fff;background:#f5f5f5"></div>
<div class="ab" style="left:503px;top:318px;width:18px;height:16px;border:1px solid #fff;background:#f5f5f5"></div>
<div class="ab" style="left:522px;top:318px;width:73px;height:16px;border:1px solid #fff;background:#f5f5f5"></div>
<div class="ab" style="left:596px;top:318px;width:58px;height:16px;border:1px solid #fff;background:#f5f5f5"></div>
<div class="ab" style="left:655px;top:318px;width:56px;height:16px;border:1px solid #fff;background:#f5f5f5"></div>
<div class="ab" style="left:712px;top:318px;width:70px;height:16px;border:1px solid #fff;background:#f5f5f5"></div>
<div class="ab" style="left:783px;top:318px;width:70px;height:16px;border:1px solid #fff;background:#f5f5f5"></div>
<div class="ab" style="left:854px;top:318px;width:70px;height:16px;border:1px solid #fff;background:#f5f5f5"></div>
<div class="ab" style="left:925px;top:318px;width:70px;height:16px;border:1px solid #fff;background:#f5f5f5"></div>
<div class="ab" style="left:996px;top:318px;width:45px;height:16px;border:1px solid #fff;background:#f5f5f5"></div>
<div class="hl" style="left:5px;top:334px;width:1036px"></div>
<div class="rsq" style="left:8px;top:320px;background:#e00000"></div>
<div class="cell" style="left:40px;top:320px;width:96px;letter-spacing:0.1px">00002568-0010</div>
<div class="cell" style="left:137px;top:320px;width:90px;letter-spacing:-0.3px">B7800</div>
<div class="cell" style="left:228px;top:320px;width:120px;letter-spacing:-0.3px">BOCAL NEF</div>
<div class="cell" style="left:349px;top:320px;width:82px;letter-spacing:-0.3px">BRICOSYS</div>
<div class="cell" style="left:432px;top:320px;width:70px;letter-spacing:0.1px">00002568</div>
<div class="cell" style="left:522px;top:320px;width:73px;letter-spacing:0.1px">20/12/2022</div>
<div class="cell" style="left:595px;top:320px;width:59px;text-align:right;letter-spacing:0.1px">150,00</div>
<div class="cell" style="left:654px;top:320px;width:57px;text-align:right;letter-spacing:0.1px">100,00</div>
<div class="cell" style="left:712px;top:320px;width:70px;letter-spacing:0.1px">20/12/2022</div>
<div class="cell" style="left:783px;top:320px;width:70px;letter-spacing:0.1px">08/12/2022</div>
<div class="cell" style="left:925px;top:320px;width:70px;letter-spacing:0.1px">20/12/2022</div>
<div class="cell" style="left:996px;top:320px;width:45px;letter-spacing:0.1px">001</div>
<div class="hl" style="left:5px;top:352px;width:1036px"></div>
<div class="rsq" style="left:8px;top:338px;background:#e00000"></div>
<div class="cell" style="left:40px;top:338px;width:96px;letter-spacing:0.1px">00002560-0010</div>
<div class="cell" style="left:137px;top:338px;width:90px;letter-spacing:-0.3px">ZA66900</div>
<div class="cell" style="left:228px;top:338px;width:120px;letter-spacing:-0.3px">ZAQ 600 NF VEG</div>
<div class="cell" style="left:349px;top:338px;width:82px;letter-spacing:-0.3px">BRICOSYS</div>
<div class="cell" style="left:432px;top:338px;width:70px;letter-spacing:0.1px">00002560</div>
<div class="cell" style="left:522px;top:338px;width:73px;letter-spacing:0.1px">14/02/2022</div>
<div class="cell" style="left:595px;top:338px;width:59px;text-align:right;letter-spacing:0.1px">250,00</div>
<div class="cell" style="left:654px;top:338px;width:57px;text-align:right;letter-spacing:0.1px">200,00</div>
<div class="cell" style="left:712px;top:338px;width:70px;letter-spacing:0.1px">09/12/2022</div>
<div class="cell" style="left:783px;top:338px;width:70px;letter-spacing:0.1px">21/12/2022</div>
<div class="cell" style="left:925px;top:338px;width:70px;letter-spacing:0.1px">09/12/2022</div>
<div class="cell" style="left:996px;top:338px;width:45px;letter-spacing:0.1px">001</div>
<div class="ab" style="left:23px;top:353px;width:16px;height:16px;border:1px solid #fff;background:#f5f5f5"></div>
<div class="ab" style="left:40px;top:353px;width:96px;height:16px;border:1px solid #fff;background:#f5f5f5"></div>
<div class="ab" style="left:137px;top:353px;width:90px;height:16px;border:1px solid #fff;background:#f5f5f5"></div>
<div class="ab" style="left:228px;top:353px;width:120px;height:16px;border:1px solid #fff;background:#f5f5f5"></div>
<div class="ab" style="left:349px;top:353px;width:82px;height:16px;border:1px solid #fff;background:#f5f5f5"></div>
<div class="ab" style="left:432px;top:353px;width:70px;height:16px;border:1px solid #fff;background:#f5f5f5"></div>
<div class="ab" style="left:503px;top:353px;width:18px;height:16px;border:1px solid #fff;background:#f5f5f5"></div>
<div class="ab" style="left:522px;top:353px;width:73px;height:16px;border:1px solid #fff;background:#f5f5f5"></div>
<div class="ab" style="left:596px;top:353px;width:58px;height:16px;border:1px solid #fff;background:#f5f5f5"></div>
<div class="ab" style="left:655px;top:353px;width:56px;height:16px;border:1px solid #fff;background:#f5f5f5"></div>
<div class="ab" style="left:712px;top:353px;width:70px;height:16px;border:1px solid #fff;background:#f5f5f5"></div>
<div class="ab" style="left:783px;top:353px;width:70px;height:16px;border:1px solid #fff;background:#f5f5f5"></div>
<div class="ab" style="left:854px;top:353px;width:70px;height:16px;border:1px solid #fff;background:#f5f5f5"></div>
<div class="ab" style="left:925px;top:353px;width:70px;height:16px;border:1px solid #fff;background:#f5f5f5"></div>
<div class="ab" style="left:996px;top:353px;width:45px;height:16px;border:1px solid #fff;background:#f5f5f5"></div>
<div class="hl" style="left:5px;top:369px;width:1036px"></div>
<div class="rsq" style="left:8px;top:355px;background:#00ff00"></div>
<div class="rci" style="left:24px;top:354px"></div>
<div class="cell" style="left:40px;top:355px;width:96px;letter-spacing:0.1px">00002560-0020</div>
<div class="cell" style="left:137px;top:355px;width:90px;letter-spacing:-0.3px">ZA66900</div>
<div class="cell" style="left:228px;top:355px;width:120px;letter-spacing:-0.3px">ZAQ 600 NF VEG</div>
<div class="cell" style="left:349px;top:355px;width:82px;letter-spacing:-0.3px">BRICOSYS</div>
<div class="cell" style="left:432px;top:355px;width:70px;letter-spacing:0.1px">00002560</div>
<div class="cell" style="left:522px;top:355px;width:73px;letter-spacing:0.1px">14/02/2022</div>
<div class="cell" style="left:595px;top:355px;width:59px;text-align:right;letter-spacing:0.1px">250,00</div>
<div class="cell" style="left:654px;top:355px;width:57px;text-align:right;letter-spacing:0.1px">0,00</div>
<div class="cell" style="left:712px;top:355px;width:70px;letter-spacing:0.1px">16/12/2022</div>
<div class="cell" style="left:925px;top:355px;width:70px;letter-spacing:0.1px">16/12/2022</div>
<div class="cell" style="left:996px;top:355px;width:45px;letter-spacing:0.1px">001</div>
<div class="hl" style="left:5px;top:387px;width:1036px"></div>
<div class="rsq" style="left:8px;top:373px;background:#00ff00"></div>
<div class="rci" style="left:24px;top:372px"></div>
<div class="cell" style="left:40px;top:373px;width:96px;letter-spacing:0.1px">00002560-0030</div>
<div class="cell" style="left:137px;top:373px;width:90px;letter-spacing:-0.3px">ZA66900</div>
<div class="cell" style="left:228px;top:373px;width:120px;letter-spacing:-0.3px">ZAQ 600 NF VEG</div>
<div class="cell" style="left:349px;top:373px;width:82px;letter-spacing:-0.3px">BRICOSYS</div>
<div class="cell" style="left:432px;top:373px;width:70px;letter-spacing:0.1px">00002560</div>
<div class="cell" style="left:522px;top:373px;width:73px;letter-spacing:0.1px">14/02/2022</div>
<div class="cell" style="left:595px;top:373px;width:59px;text-align:right;letter-spacing:0.1px">250,00</div>
<div class="cell" style="left:654px;top:373px;width:57px;text-align:right;letter-spacing:0.1px">0,00</div>
<div class="cell" style="left:712px;top:373px;width:70px;letter-spacing:0.1px">23/12/2022</div>
<div class="cell" style="left:925px;top:373px;width:70px;letter-spacing:0.1px">23/12/2022</div>
<div class="cell" style="left:996px;top:373px;width:45px;letter-spacing:0.1px">001</div>
<div class="ab" style="left:23px;top:388px;width:16px;height:16px;border:1px solid #fff;background:#f5f5f5"></div>
<div class="ab" style="left:40px;top:388px;width:96px;height:16px;border:1px solid #fff;background:#f5f5f5"></div>
<div class="ab" style="left:137px;top:388px;width:90px;height:16px;border:1px solid #fff;background:#f5f5f5"></div>
<div class="ab" style="left:228px;top:388px;width:120px;height:16px;border:1px solid #fff;background:#f5f5f5"></div>
<div class="ab" style="left:349px;top:388px;width:82px;height:16px;border:1px solid #fff;background:#f5f5f5"></div>
<div class="ab" style="left:432px;top:388px;width:70px;height:16px;border:1px solid #fff;background:#f5f5f5"></div>
<div class="ab" style="left:503px;top:388px;width:18px;height:16px;border:1px solid #fff;background:#f5f5f5"></div>
<div class="ab" style="left:522px;top:388px;width:73px;height:16px;border:1px solid #fff;background:#f5f5f5"></div>
<div class="ab" style="left:596px;top:388px;width:58px;height:16px;border:1px solid #fff;background:#f5f5f5"></div>
<div class="ab" style="left:655px;top:388px;width:56px;height:16px;border:1px solid #fff;background:#f5f5f5"></div>
<div class="ab" style="left:712px;top:388px;width:70px;height:16px;border:1px solid #fff;background:#f5f5f5"></div>
<div class="ab" style="left:783px;top:388px;width:70px;height:16px;border:1px solid #fff;background:#f5f5f5"></div>
<div class="ab" style="left:854px;top:388px;width:70px;height:16px;border:1px solid #fff;background:#f5f5f5"></div>
<div class="ab" style="left:925px;top:388px;width:70px;height:16px;border:1px solid #fff;background:#f5f5f5"></div>
<div class="ab" style="left:996px;top:388px;width:45px;height:16px;border:1px solid #fff;background:#f5f5f5"></div>
<div class="hl" style="left:5px;top:404px;width:1036px"></div>
<div class="rsq" style="left:8px;top:390px;background:#00ff00"></div>
<div class="rci" style="left:24px;top:389px"></div>
<div class="cell" style="left:40px;top:390px;width:96px;letter-spacing:0.1px">00002560-0040</div>
<div class="cell" style="left:137px;top:390px;width:90px;letter-spacing:-0.3px">ZA66900</div>
<div class="cell" style="left:228px;top:390px;width:120px;letter-spacing:-0.3px">ZAQ 600 NF VEG</div>
<div class="cell" style="left:349px;top:390px;width:82px;letter-spacing:-0.3px">BRICOSYS</div>
<div class="cell" style="left:432px;top:390px;width:70px;letter-spacing:0.1px">00002560</div>
<div class="cell" style="left:522px;top:390px;width:73px;letter-spacing:0.1px">14/02/2022</div>
<div class="cell" style="left:595px;top:390px;width:59px;text-align:right;letter-spacing:0.1px">250,00</div>
<div class="cell" style="left:654px;top:390px;width:57px;text-align:right;letter-spacing:0.1px">0,00</div>
<div class="cell" style="left:712px;top:390px;width:70px;letter-spacing:0.1px">06/01/2023</div>
<div class="cell" style="left:925px;top:390px;width:70px;letter-spacing:0.1px">06/01/2023</div>
<div class="cell" style="left:996px;top:390px;width:45px;letter-spacing:0.1px">001</div>
<div class="hl" style="left:5px;top:421px;width:1036px"></div>
<div class="rsq" style="left:8px;top:407px;background:#00ff00"></div>
<div class="rci" style="left:24px;top:406px"></div>
<div class="cell" style="left:40px;top:407px;width:96px;letter-spacing:0.1px">00002560-0050</div>
<div class="cell" style="left:137px;top:407px;width:90px;letter-spacing:-0.3px">ZA66900</div>
<div class="cell" style="left:228px;top:407px;width:120px;letter-spacing:-0.3px">ZAQ 600 NF VEG</div>
<div class="cell" style="left:349px;top:407px;width:82px;letter-spacing:-0.3px">BRICOSYS</div>
<div class="cell" style="left:432px;top:407px;width:70px;letter-spacing:0.1px">00002560</div>
<div class="cell" style="left:522px;top:407px;width:73px;letter-spacing:0.1px">14/02/2022</div>
<div class="cell" style="left:595px;top:407px;width:59px;text-align:right;letter-spacing:0.1px">250,00</div>
<div class="cell" style="left:654px;top:407px;width:57px;text-align:right;letter-spacing:0.1px">0,00</div>
<div class="cell" style="left:712px;top:407px;width:70px;letter-spacing:0.1px">13/01/2023</div>
<div class="cell" style="left:925px;top:407px;width:70px;letter-spacing:0.1px">13/01/2023</div>
<div class="cell" style="left:996px;top:407px;width:45px;letter-spacing:0.1px">001</div>
<div class="ab" style="left:23px;top:422px;width:16px;height:17px;border:1px solid #fff;background:#f5f5f5"></div>
<div class="ab" style="left:40px;top:422px;width:96px;height:17px;border:1px solid #fff;background:#f5f5f5"></div>
<div class="ab" style="left:137px;top:422px;width:90px;height:17px;border:1px solid #fff;background:#f5f5f5"></div>
<div class="ab" style="left:228px;top:422px;width:120px;height:17px;border:1px solid #fff;background:#f5f5f5"></div>
<div class="ab" style="left:349px;top:422px;width:82px;height:17px;border:1px solid #fff;background:#f5f5f5"></div>
<div class="ab" style="left:432px;top:422px;width:70px;height:17px;border:1px solid #fff;background:#f5f5f5"></div>
<div class="ab" style="left:503px;top:422px;width:18px;height:17px;border:1px solid #fff;background:#f5f5f5"></div>
<div class="ab" style="left:522px;top:422px;width:73px;height:17px;border:1px solid #fff;background:#f5f5f5"></div>
<div class="ab" style="left:596px;top:422px;width:58px;height:17px;border:1px solid #fff;background:#f5f5f5"></div>
<div class="ab" style="left:655px;top:422px;width:56px;height:17px;border:1px solid #fff;background:#f5f5f5"></div>
<div class="ab" style="left:712px;top:422px;width:70px;height:17px;border:1px solid #fff;background:#f5f5f5"></div>
<div class="ab" style="left:783px;top:422px;width:70px;height:17px;border:1px solid #fff;background:#f5f5f5"></div>
<div class="ab" style="left:854px;top:422px;width:70px;height:17px;border:1px solid #fff;background:#f5f5f5"></div>
<div class="ab" style="left:925px;top:422px;width:70px;height:17px;border:1px solid #fff;background:#f5f5f5"></div>
<div class="ab" style="left:996px;top:422px;width:45px;height:17px;border:1px solid #fff;background:#f5f5f5"></div>
<div class="hl" style="left:5px;top:439px;width:1036px"></div>
<div class="rsq" style="left:8px;top:425px;background:#00ff00"></div>
<div class="rci" style="left:24px;top:424px"></div>
<div class="cell" style="left:40px;top:425px;width:96px;letter-spacing:0.1px">00002560-0060</div>
<div class="cell" style="left:137px;top:425px;width:90px;letter-spacing:-0.3px">ZA66900</div>
<div class="cell" style="left:228px;top:425px;width:120px;letter-spacing:-0.3px">ZAQ 600 NF VEG</div>
<div class="cell" style="left:349px;top:425px;width:82px;letter-spacing:-0.3px">BRICOSYS</div>
<div class="cell" style="left:432px;top:425px;width:70px;letter-spacing:0.1px">00002560</div>
<div class="cell" style="left:522px;top:425px;width:73px;letter-spacing:0.1px">14/02/2022</div>
<div class="cell" style="left:595px;top:425px;width:59px;text-align:right;letter-spacing:0.1px">250,00</div>
<div class="cell" style="left:654px;top:425px;width:57px;text-align:right;letter-spacing:0.1px">0,00</div>
<div class="cell" style="left:712px;top:425px;width:70px;letter-spacing:0.1px">20/01/2023</div>
<div class="cell" style="left:925px;top:425px;width:70px;letter-spacing:0.1px">20/01/2023</div>
<div class="cell" style="left:996px;top:425px;width:45px;letter-spacing:0.1px">001</div>
<div class="hl" style="left:5px;top:456px;width:1036px"></div>
<div class="rsq" style="left:8px;top:442px;background:#00ff00"></div>
<div class="rci" style="left:24px;top:441px"></div>
<div class="cell" style="left:40px;top:442px;width:96px;letter-spacing:0.1px">00002560-0070</div>
<div class="cell" style="left:137px;top:442px;width:90px;letter-spacing:-0.3px">ZA66900</div>
<div class="cell" style="left:228px;top:442px;width:120px;letter-spacing:-0.3px">ZAQ 600 NF VEG</div>
<div class="cell" style="left:349px;top:442px;width:82px;letter-spacing:-0.3px">BRICOSYS</div>
<div class="cell" style="left:432px;top:442px;width:70px;letter-spacing:0.1px">00002560</div>
<div class="cell" style="left:522px;top:442px;width:73px;letter-spacing:0.1px">14/02/2022</div>
<div class="cell" style="left:595px;top:442px;width:59px;text-align:right;letter-spacing:0.1px">250,00</div>
<div class="cell" style="left:654px;top:442px;width:57px;text-align:right;letter-spacing:0.1px">0,00</div>
<div class="cell" style="left:712px;top:442px;width:70px;letter-spacing:0.1px">27/01/2023</div>
<div class="cell" style="left:925px;top:442px;width:70px;letter-spacing:0.1px">27/01/2023</div>
<div class="cell" style="left:996px;top:442px;width:45px;letter-spacing:0.1px">001</div>
<div class="ab" style="left:23px;top:457px;width:16px;height:17px;border:1px solid #fff;background:#f5f5f5"></div>
<div class="ab" style="left:40px;top:457px;width:96px;height:17px;border:1px solid #fff;background:#f5f5f5"></div>
<div class="ab" style="left:137px;top:457px;width:90px;height:17px;border:1px solid #fff;background:#f5f5f5"></div>
<div class="ab" style="left:228px;top:457px;width:120px;height:17px;border:1px solid #fff;background:#f5f5f5"></div>
<div class="ab" style="left:349px;top:457px;width:82px;height:17px;border:1px solid #fff;background:#f5f5f5"></div>
<div class="ab" style="left:432px;top:457px;width:70px;height:17px;border:1px solid #fff;background:#f5f5f5"></div>
<div class="ab" style="left:503px;top:457px;width:18px;height:17px;border:1px solid #fff;background:#f5f5f5"></div>
<div class="ab" style="left:522px;top:457px;width:73px;height:17px;border:1px solid #fff;background:#f5f5f5"></div>
<div class="ab" style="left:596px;top:457px;width:58px;height:17px;border:1px solid #fff;background:#f5f5f5"></div>
<div class="ab" style="left:655px;top:457px;width:56px;height:17px;border:1px solid #fff;background:#f5f5f5"></div>
<div class="ab" style="left:712px;top:457px;width:70px;height:17px;border:1px solid #fff;background:#f5f5f5"></div>
<div class="ab" style="left:783px;top:457px;width:70px;height:17px;border:1px solid #fff;background:#f5f5f5"></div>
<div class="ab" style="left:854px;top:457px;width:70px;height:17px;border:1px solid #fff;background:#f5f5f5"></div>
<div class="ab" style="left:925px;top:457px;width:70px;height:17px;border:1px solid #fff;background:#f5f5f5"></div>
<div class="ab" style="left:996px;top:457px;width:45px;height:17px;border:1px solid #fff;background:#f5f5f5"></div>
<div class="hl" style="left:5px;top:474px;width:1036px"></div>
<div class="rsq" style="left:8px;top:460px;background:#00ff00"></div>
<div class="rci" style="left:24px;top:459px"></div>
<div class="cell" style="left:40px;top:460px;width:96px;letter-spacing:0.1px">00002560-0080</div>
<div class="cell" style="left:137px;top:460px;width:90px;letter-spacing:-0.3px">ZA66900</div>
<div class="cell" style="left:228px;top:460px;width:120px;letter-spacing:-0.3px">ZAQ 600 NF VEG</div>
<div class="cell" style="left:349px;top:460px;width:82px;letter-spacing:-0.3px">BRICOSYS</div>
<div class="cell" style="left:432px;top:460px;width:70px;letter-spacing:0.1px">00002560</div>
<div class="cell" style="left:522px;top:460px;width:73px;letter-spacing:0.1px">14/02/2022</div>
<div class="cell" style="left:595px;top:460px;width:59px;text-align:right;letter-spacing:0.1px">250,00</div>
<div class="cell" style="left:654px;top:460px;width:57px;text-align:right;letter-spacing:0.1px">0,00</div>
<div class="cell" style="left:712px;top:460px;width:70px;letter-spacing:0.1px">03/02/2023</div>
<div class="cell" style="left:925px;top:460px;width:70px;letter-spacing:0.1px">03/02/2023</div>
<div class="cell" style="left:996px;top:460px;width:45px;letter-spacing:0.1px">001</div>
<div class="hl" style="left:5px;top:491px;width:1036px"></div>
<div class="rsq" style="left:8px;top:477px;background:#00ff00"></div>
<div class="rci" style="left:24px;top:476px"></div>
<div class="cell" style="left:40px;top:477px;width:96px;letter-spacing:0.1px">00002560-0090</div>
<div class="cell" style="left:137px;top:477px;width:90px;letter-spacing:-0.3px">ZA66900</div>
<div class="cell" style="left:228px;top:477px;width:120px;letter-spacing:-0.3px">ZAQ 600 NF VEG</div>
<div class="cell" style="left:349px;top:477px;width:82px;letter-spacing:-0.3px">BRICOSYS</div>
<div class="cell" style="left:432px;top:477px;width:70px;letter-spacing:0.1px">00002560</div>
<div class="cell" style="left:522px;top:477px;width:73px;letter-spacing:0.1px">14/02/2022</div>
<div class="cell" style="left:595px;top:477px;width:59px;text-align:right;letter-spacing:0.1px">250,00</div>
<div class="cell" style="left:654px;top:477px;width:57px;text-align:right;letter-spacing:0.1px">0,00</div>
<div class="cell" style="left:712px;top:477px;width:70px;letter-spacing:0.1px">10/02/2023</div>
<div class="cell" style="left:925px;top:477px;width:70px;letter-spacing:0.1px">10/02/2023</div>
<div class="cell" style="left:996px;top:477px;width:45px;letter-spacing:0.1px">001</div>
<div class="ab" style="left:23px;top:492px;width:16px;height:17px;border:1px solid #fff;background:#f5f5f5"></div>
<div class="ab" style="left:40px;top:492px;width:96px;height:17px;border:1px solid #fff;background:#f5f5f5"></div>
<div class="ab" style="left:137px;top:492px;width:90px;height:17px;border:1px solid #fff;background:#f5f5f5"></div>
<div class="ab" style="left:228px;top:492px;width:120px;height:17px;border:1px solid #fff;background:#f5f5f5"></div>
<div class="ab" style="left:349px;top:492px;width:82px;height:17px;border:1px solid #fff;background:#f5f5f5"></div>
<div class="ab" style="left:432px;top:492px;width:70px;height:17px;border:1px solid #fff;background:#f5f5f5"></div>
<div class="ab" style="left:503px;top:492px;width:18px;height:17px;border:1px solid #fff;background:#f5f5f5"></div>
<div class="ab" style="left:522px;top:492px;width:73px;height:17px;border:1px solid #fff;background:#f5f5f5"></div>
<div class="ab" style="left:596px;top:492px;width:58px;height:17px;border:1px solid #fff;background:#f5f5f5"></div>
<div class="ab" style="left:655px;top:492px;width:56px;height:17px;border:1px solid #fff;background:#f5f5f5"></div>
<div class="ab" style="left:712px;top:492px;width:70px;height:17px;border:1px solid #fff;background:#f5f5f5"></div>
<div class="ab" style="left:783px;top:492px;width:70px;height:17px;border:1px solid #fff;background:#f5f5f5"></div>
<div class="ab" style="left:854px;top:492px;width:70px;height:17px;border:1px solid #fff;background:#f5f5f5"></div>
<div class="ab" style="left:925px;top:492px;width:70px;height:17px;border:1px solid #fff;background:#f5f5f5"></div>
<div class="ab" style="left:996px;top:492px;width:45px;height:17px;border:1px solid #fff;background:#f5f5f5"></div>
<div class="hl" style="left:5px;top:509px;width:1036px"></div>
<div class="rsq" style="left:8px;top:495px;background:#00ff00"></div>
<div class="rci" style="left:24px;top:494px"></div>
<div class="cell" style="left:40px;top:495px;width:96px;letter-spacing:0.1px">00002560-0100</div>
<div class="cell" style="left:137px;top:495px;width:90px;letter-spacing:-0.3px">ZA66900</div>
<div class="cell" style="left:228px;top:495px;width:120px;letter-spacing:-0.3px">ZAQ 600 NF VEG</div>
<div class="cell" style="left:349px;top:495px;width:82px;letter-spacing:-0.3px">BRICOSYS</div>
<div class="cell" style="left:432px;top:495px;width:70px;letter-spacing:0.1px">00002560</div>
<div class="cell" style="left:522px;top:495px;width:73px;letter-spacing:0.1px">14/02/2022</div>
<div class="cell" style="left:595px;top:495px;width:59px;text-align:right;letter-spacing:0.1px">250,00</div>
<div class="cell" style="left:654px;top:495px;width:57px;text-align:right;letter-spacing:0.1px">0,00</div>
<div class="cell" style="left:712px;top:495px;width:70px;letter-spacing:0.1px">17/02/2023</div>
<div class="cell" style="left:925px;top:495px;width:70px;letter-spacing:0.1px">17/02/2023</div>
<div class="cell" style="left:996px;top:495px;width:45px;letter-spacing:0.1px">001</div>
<div class="ab" style="left:5px;top:510px;width:34px;height:17px;background:#fff"></div>
<div class="ab" style="left:39px;top:510px;width:1002px;height:17px;background:#aacdf1"></div>
<div class="ab" style="left:22px;top:511px;width:1px;height:15px;background:#c8dcf4"></div>
<div class="rsq" style="left:8px;top:512px;background:#00ff00"></div>
<div class="rci" style="left:24px;top:511px"></div>
<div class="cell" style="left:40px;top:512px;width:96px;letter-spacing:0.1px">00002560-0110</div>
<div class="cell" style="left:137px;top:512px;width:90px;letter-spacing:-0.3px">ZA66900</div>
<div class="cell" style="left:228px;top:512px;width:120px;letter-spacing:-0.3px">ZAQ 600 NF VEG</div>
<div class="cell" style="left:349px;top:512px;width:82px;letter-spacing:-0.3px">BRICOSYS</div>
<div class="cell" style="left:432px;top:512px;width:70px;letter-spacing:0.1px">00002560</div>
<div class="cell" style="left:522px;top:512px;width:73px;letter-spacing:0.1px">15/02/2022</div>
<div class="cell" style="left:595px;top:512px;width:59px;text-align:right;letter-spacing:0.1px">250,00</div>
<div class="cell" style="left:654px;top:512px;width:57px;text-align:right;letter-spacing:0.1px">0,00</div>
<div class="cell" style="left:712px;top:512px;width:70px;letter-spacing:0.1px">23/02/2023</div>
<div class="cell" style="left:925px;top:512px;width:70px;letter-spacing:0.1px">23/02/2023</div>
<div class="cell" style="left:996px;top:512px;width:45px;letter-spacing:0.1px">001</div>
<div class="vl" style="left:136px;top:162px;height:365px"></div>
<div class="vl" style="left:227px;top:162px;height:365px"></div>
<div class="vl" style="left:348px;top:162px;height:365px"></div>
<div class="vl" style="left:431px;top:162px;height:365px"></div>
<div class="vl" style="left:502px;top:162px;height:365px"></div>
<div class="vl" style="left:521px;top:162px;height:365px"></div>
<div class="vl" style="left:595px;top:162px;height:365px"></div>
<div class="vl" style="left:654px;top:162px;height:365px"></div>
<div class="vl" style="left:711px;top:162px;height:365px"></div>
<div class="vl" style="left:782px;top:162px;height:365px"></div>
<div class="vl" style="left:853px;top:162px;height:365px"></div>
<div class="vl" style="left:924px;top:162px;height:365px"></div>
<div class="vl" style="left:995px;top:162px;height:365px"></div>
<div class="vl" style="left:1041px;top:162px;height:365px"></div>
<div class="ab" style="left:5px;top:510px;width:1036px;height:16px;border-top:1px dotted #5a3410;border-bottom:1px dotted #5a3410;border-left:1px dotted #5a3410"></div>
<div class="ab" style="left:1054px;top:144px;width:17px;height:384px;border:1px solid #c8c8c8;background:#fff"></div>
<div class="ab" style="left:1054px;top:144px;width:17px;height:17px;border:1px solid #c8c8c8;background:#fff"></div>
<svg class="ab" style="left:1054px;top:144px" width="17" height="17" viewBox="0 0 17 17"><path d="M4.8 11 L8.5 7.3 L12.2 11" fill="none" stroke="#505050" stroke-width="1.6"/></svg>
<div class="ab" style="left:1054px;top:494px;width:17px;height:17px;border:1px solid #b8b8b8;background:#dadada"></div>
<div class="ab" style="left:1054px;top:511px;width:17px;height:17px;border:1px solid #c8c8c8;background:#fff"></div>
<svg class="ab" style="left:1054px;top:511px" width="17" height="17" viewBox="0 0 17 17"><path d="M4.8 6.5 L8.5 10.2 L12.2 6.5" fill="none" stroke="#505050" stroke-width="1.6"/></svg>
<div class="btn" style="left:8px;width:65px"><span style="left:16.5px">Gérer</span></div>
<svg class="ab" style="left:8.5px;top:543px" width="17" height="16" viewBox="0 0 17 16">
<g transform="translate(7,6.5)"><path d="M-1.2,-6.5 L1.2,-6.5 L1.6,-4.6 L3.1,-3.9 L4.7,-5 L6.1,-3.4 L5,-1.9 L5.5,-0.3 L6.5,0.9 L6,2.9 L4.4,3.2 L3.4,4.6 L3.6,6.3 L1.5,6.6 L0.6,5.2 L-1,5.2 L-2,6.5 L-3.9,5.7 L-3.6,4 L-4.9,2.9 L-6.5,3 L-6.8,0.9 L-5.3,0 L-5.3,-1.6 L-6.3,-3 L-5,-4.6 L-3.4,-4 L-2,-4.9 Z" fill="#5aa0e0" stroke="#3a78c0" stroke-width="0.7"/><circle r="2.2" fill="#dcdcdc" stroke="#3a78c0" stroke-width="0.7"/></g>
<g transform="translate(11.3,11.3)"><circle r="3.6" fill="#f8b020" stroke="#e08a00" stroke-width="1.4" stroke-dasharray="1.4 0.9"/><circle r="1.4" fill="#3a80d0"/></g></svg>
<div class="btn" style="left:79px;width:75px"><span style="left:20px">Modifier</span></div>
<svg class="ab" style="left:81px;top:543px" width="17" height="16" viewBox="0 0 17 16">
<path d="M3.5 10.5 L12 2 L14.5 4.5 L6 13 Z" fill="#f8a830" stroke="#c87a10" stroke-width="0.8"/>
<path d="M12 2 L13 1 Q14 0.3 15 1 L15.6 1.6 Q16.2 2.6 15.5 3.5 L14.5 4.5 Z" fill="#e888c8" stroke="#a060a0" stroke-width="0.6"/>
<path d="M3.5 10.5 L6 13 L1.2 15 Z" fill="#f0d8a8" stroke="#907050" stroke-width="0.6"/>
<path d="M1.2 15 L2.2 12.8 L3.4 14 Z" fill="#404040"/></svg>
<div class="btn" style="left:158px;width:65px"><span style="left:20px">Créer</span></div>
<svg class="ab" style="left:161px;top:544px" width="15" height="15" viewBox="0 0 15 15">
<defs><radialGradient id="gp" cx="40%" cy="35%" r="65%"><stop offset="0" stop-color="#b8e860"/><stop offset="0.6" stop-color="#70b818"/><stop offset="1" stop-color="#4a8a08"/></radialGradient></defs>
<circle cx="7.5" cy="7.5" r="7" fill="url(#gp)" stroke="#5a9a10" stroke-width="0.8"/>
<path d="M7.5 3.5 V11.5 M3.5 7.5 H11.5" stroke="#fff" stroke-width="2.6"/></svg>
<div class="btn" style="left:229px;width:94px"><span style="left:20px">Supprimer</span></div>
<svg class="ab" style="left:231px;top:543px" width="17" height="16" viewBox="0 0 17 16">
<path d="M1.2 11.5 L8.5 4.2 L12 7.7 L4.7 15 Q3.8 15.8 2.8 15 L1 13.2 Q0.3 12.3 1.2 11.5 Z" fill="#f2f2f2" stroke="#8a8a8a" stroke-width="0.8"/>
<path d="M8.5 4.2 L11.2 1.5 Q12.2 0.6 13.2 1.4 L15.4 3.6 Q16.2 4.6 15.3 5.6 L12 7.7 Z" fill="#f0a8d0" stroke="#b070a0" stroke-width="0.8"/>
<path d="M2 13 L9.5 5.5" stroke="#d0d0d0" stroke-width="1.2"/></svg>
<div class="btn" style="left:327px;width:105px"><span style="left:20px">Transformer</span></div>
<svg class="ab" style="left:329px;top:542px" width="17" height="17" viewBox="0 0 17 17">
<path d="M1 5.5 L8 1 L15 5.5" fill="none" stroke="#c85a10" stroke-width="1.4"/>
<rect x="2.5" y="5" width="11" height="4.5" fill="#e4e6c8" stroke="#909090" stroke-width="0.8"/>
<text x="8" y="9" text-anchor="middle" font-family="Liberation Sans" font-size="6.5" fill="#404850">$</text>
<rect x="1.5" y="9.5" width="13" height="6" fill="#f6f6f0" stroke="#8a8a8a" stroke-width="0.8"/>
<rect x="4" y="11" width="8" height="3.2" fill="#b84a08"/>
<path d="M5.2 12.5 H6.2 M7.5 12.5 H8.5 M9.8 12.5 H10.8" stroke="#f8d040" stroke-width="1"/>
<rect x="1" y="14.5" width="2" height="1.5" fill="#b84a08"/><rect x="13" y="14.5" width="2" height="1.5" fill="#b84a08"/></svg>
<div class="btn" style="left:440px;width:127px"><span style="left:20px">Imprimer la liste</span></div>
<svg class="ab" style="left:442px;top:543px" width="17" height="16" viewBox="0 0 17 16">
<rect x="4.5" y="0.5" width="7" height="5" fill="#fff" stroke="#3a80c0" stroke-width="1"/>
<rect x="6" y="2" width="4" height="1.2" fill="#a8d0f0"/>
<rect x="0.7" y="4.5" width="15" height="7.5" rx="1" fill="#f0f0f0" stroke="#707070" stroke-width="1"/>
<rect x="1.5" y="7" width="13" height="2" fill="#8a8a8a"/>
<rect x="5.5" y="7.5" width="8" height="8" fill="#f4f8f0" stroke="#707070" stroke-width="0.9"/>
<path d="M7 9.5 L8.5 11 L10 9.5 Z M7 12.5 L8.5 14 L10 12.5 Z" fill="#3a9a20"/>
<path d="M11.5 10 H12.5 M11.5 13 H12.5" stroke="#909090" stroke-width="0.8"/></svg>
<div class="btn" style="left:576px;width:87px"><span style="left:20px">Imprimer</span></div>
<svg class="ab" style="left:578px;top:543px" width="17" height="16" viewBox="0 0 17 16">
<rect x="4.5" y="0.5" width="8" height="5.5" rx="1" fill="#fff" stroke="#3a80c0" stroke-width="1.1"/>
<rect x="6" y="2" width="5" height="1.3" fill="#a8d0f0"/>
<rect x="0.7" y="4.5" width="15.5" height="7.5" rx="1" fill="#f4f4f4" stroke="#707070" stroke-width="1"/>
<rect x="2.5" y="6.2" width="12" height="1.6" fill="#8a8a8a"/><rect x="2" y="8" width="13" height="2" fill="#6a6a6a"/>
<rect x="4.5" y="11" width="8" height="4.5" rx="1" fill="#fff" stroke="#3a80c0" stroke-width="1.1"/></svg>
<div class="btn" style="left:743px;width:127px"><span style="left:20px">Liste à Servir</span></div>
<svg class="ab" style="left:745px;top:543px" width="17" height="16" viewBox="0 0 17 16">
<rect x="4.5" y="0.5" width="7" height="5" fill="#fff" stroke="#3a80c0" stroke-width="1"/>
<rect x="6" y="2" width="4" height="1.2" fill="#a8d0f0"/>
<rect x="0.7" y="4.5" width="15" height="7.5" rx="1" fill="#f0f0f0" stroke="#707070" stroke-width="1"/>
<rect x="1.5" y="7" width="13" height="2" fill="#8a8a8a"/>
<rect x="5.5" y="7.5" width="8" height="8" fill="#f4f8f0" stroke="#707070" stroke-width="0.9"/>
<path d="M7 9.5 L8.5 11 L10 9.5 Z M7 12.5 L8.5 14 L10 12.5 Z" fill="#3a9a20"/>
<path d="M11.5 10 H12.5 M11.5 13 H12.5" stroke="#909090" stroke-width="0.8"/></svg>
<div class="ab" style="left:671px;top:538px;width:61px;height:27px;background:#d4d4d4;border-right:1px solid #000;border-bottom:2px solid #000"></div>
<svg class="ab" style="left:671px;top:541px" width="32" height="22" viewBox="0 0 32 22"><path d="M1 1 V19.5 H30" stroke="#000" stroke-width="1.2" fill="none"/><path d="M5 3 V15.5 H27" stroke="#000" stroke-width="1" fill="none"/><path d="M5 4 H12 V5.5 H18 V7 H24" stroke="#00e000" stroke-width="1.5" fill="none"/><path d="M5 12 H17 V13 H27" stroke="#e00000" stroke-width="1.5" fill="none"/><path d="M5 12 H12" stroke="#600000" stroke-width="1.5"/></svg>
<div class="tx" style="left:694px;top:543px;font-size:9px;font-weight:bold;letter-spacing:-0.45px;line-height:11px">Planning</div>
</body></html>
